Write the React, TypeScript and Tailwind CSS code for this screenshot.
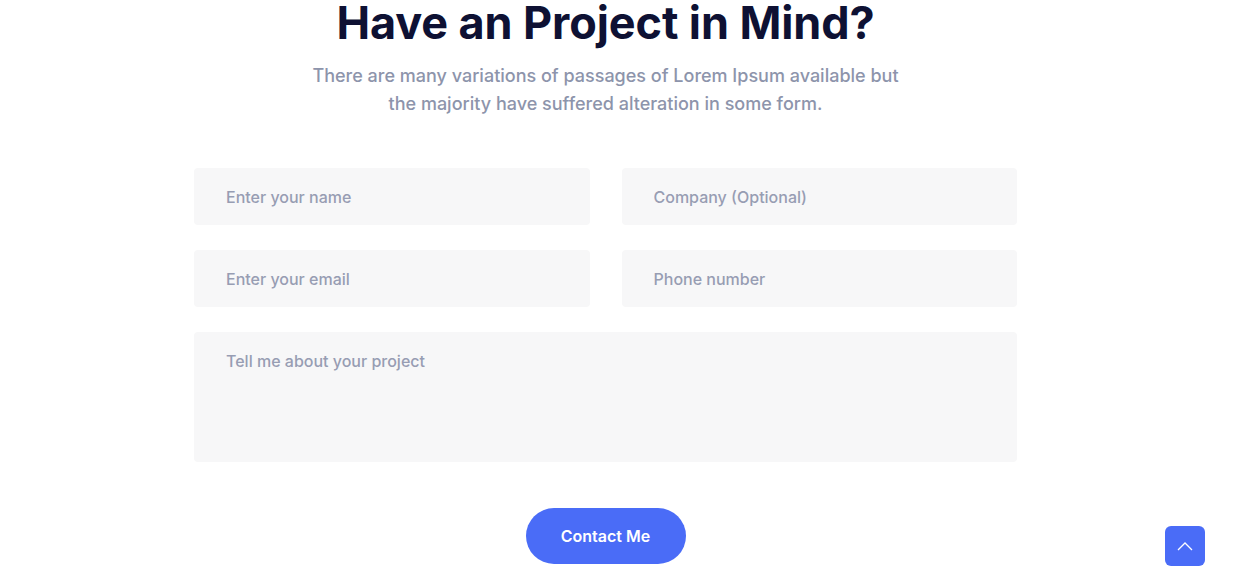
import React from "react";

export default function App() {
  return (
    <div className="min-h-[578px] bg-white font-['Inter',sans-serif] overflow-hidden">
      <section className="w-[1211px] flex flex-col items-center">
        <h2 className="text-[45px] leading-[46px] font-bold text-[#0e1133] tracking-[-0.1px]">
          Have an Project in Mind?
        </h2>
        <p className="mt-[16px] w-[600px] text-center text-[18px] leading-[28px] font-medium text-[#8d94ab]">
          There are many variations of passages of Lorem Ipsum available but the majority have suffered alteration in some form.
        </p>

        <form className="mt-[50px] w-[823px] grid grid-cols-2 gap-x-8 gap-y-[25px]">
          <Field placeholder="Enter your name" />
          <Field placeholder="Company (Optional)" />
          <Field placeholder="Enter your email" />
          <Field placeholder="Phone number" />
          <textarea
            placeholder="Tell me about your project"
            className="col-span-2 h-[130px] resize-none rounded-sm bg-[#f7f7f8] px-8 py-[17px] text-[16px] leading-[24px] font-medium text-[#0e1133] placeholder:text-[#979db3] outline-none"
          />
        </form>

        <button className="mt-[46px] h-[56px] w-[160px] rounded-full bg-[#4a6cf7] text-[16px] font-semibold text-white">
          Contact Me
        </button>
      </section>

      {/* back to top */}
      <a
        href="#"
        className="fixed right-[31px] top-[526px] flex h-10 w-10 items-center justify-center rounded-md bg-[#4a6cf7]"
      >
        <svg width="18" height="18" viewBox="0 0 18 18" fill="none">
          <path d="M2 13 L9 6 L16 13" stroke="white" strokeWidth="1.3" />
        </svg>
      </a>
    </div>
  );
}

function Field({ placeholder }: { placeholder: string }) {
  return (
    <input
      type="text"
      placeholder={placeholder}
      className="h-[57px] rounded-sm bg-[#f7f7f8] px-8 text-[16px] font-medium text-[#0e1133] placeholder:text-[#979db3] outline-none"
    />
  );
}
